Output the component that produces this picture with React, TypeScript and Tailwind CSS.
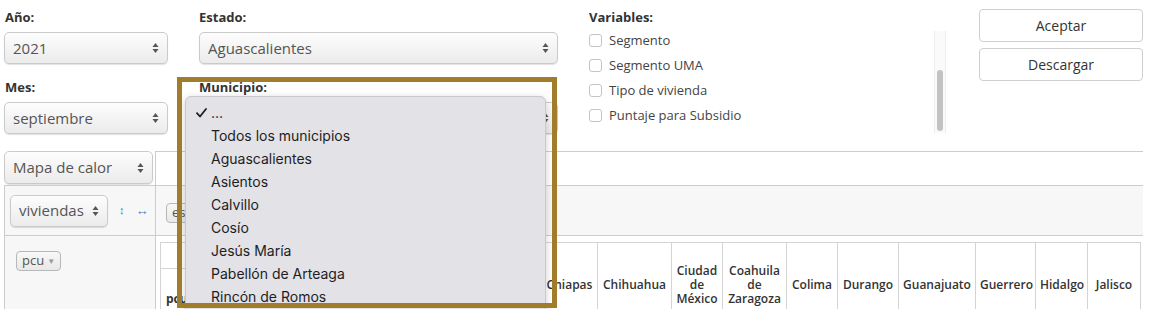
import React from "react";

const estados = [
  { name: "Chiapas", w: "w-[56px]" },
  { name: "Chihuahua", w: "w-[74px]" },
  { name: "Ciudad de México", w: "w-[51px]" },
  { name: "Coahuila de Zaragoza", w: "w-[64px]" },
  { name: "Colima", w: "w-[51px]" },
  { name: "Durango", w: "w-[61px]" },
  { name: "Guanajuato", w: "w-[77px]" },
  { name: "Guerrero", w: "w-[60px]" },
  { name: "Hidalgo", w: "w-[52px]" },
  { name: "Jalisco", w: "w-[53px]" },
];

const municipios = [
  "Todos los municipios",
  "Aguascalientes",
  "Asientos",
  "Calvillo",
  "Cosío",
  "Jesús María",
  "Pabellón de Arteaga",
  "Rincón de Romos",
];

const variables = ["Segmento", "Segmento UMA", "Tipo de vivienda", "Puntaje para Subsidio"];

function Arrows() {
  return (
    <svg width="7" height="12" viewBox="0 0 7 12" className="shrink-0">
      <path d="M0.5 5 L3.5 1 L6.5 5 Z" fill="#555" />
      <path d="M0.5 7 L3.5 11 L6.5 7 Z" fill="#555" />
    </svg>
  );
}

function NativeSelect({ value, className }: { value: string; className: string }) {
  return (
    <div
      className={`flex items-center justify-between rounded-[5px] border border-[#cacaca] bg-linear-to-b from-[#fdfdfd] to-[#ebebeb] px-[8px] text-[15px] text-[#555] shadow-[0_1px_1px_rgba(0,0,0,0.12)] ${className}`}
    >
      <span className="truncate">{value}</span>
      <Arrows />
    </div>
  );
}

function Pill({ label }: { label: string }) {
  return (
    <span className="inline-flex h-[20px] items-center gap-[3px] rounded-[4px] border border-[#b8b8b8] bg-linear-to-b from-[#f8f8f8] to-[#e8e8e8] px-[5px] text-[13px] text-[#555]">
      {label}
      <span className="text-[8px] text-[#999]">▼</span>
    </span>
  );
}

export default function App() {
  return (
    <div className="relative h-[309px] w-[1157px] overflow-hidden bg-white font-['Open_Sans',sans-serif] text-[#333]">
      {/* filtros */}
      <div className="flex items-start pl-[4px] pt-[9px]">
        <div className="w-[164px]">
          <p className="pl-[1px] text-[13px] font-bold leading-[16px]">Año:</p>
          <NativeSelect value="2021" className="mt-[7px] h-[32px]" />
          <p className="mt-[15px] pl-[1px] text-[13px] font-bold leading-[16px]">Mes:</p>
          <NativeSelect value="septiembre" className="mt-[7px] h-[32px]" />
        </div>

        <div className="ml-[31px] w-[359px]">
          <p className="text-[13px] font-bold leading-[16px]">Estado:</p>
          <NativeSelect value="Aguascalientes" className="mt-[7px] h-[32px] text-[15.5px]" />
          <p className="mt-[15px] text-[13px] font-bold leading-[16px]">Municipio:</p>
          {/* el valor queda tapado por el menú abierto */}
          <NativeSelect
            value=""
            className="mt-[7px] h-[32px] border-[#6fa2e0] shadow-[0_0_0_1px_#9cc1ee]"
          />
        </div>

        <div className="ml-[31px] w-[357px]">
          <p className="text-[13px] font-bold leading-[16px]">Variables:</p>
          <div className="mt-[3px] flex">
            <ul className="flex-1">
              {variables.map((v) => (
                <li key={v} className="flex h-[25px] items-center gap-[7px] text-[13px] text-[#444]">
                  <span className="h-[13px] w-[13px] rounded-[3px] border border-[#c4c4c4] bg-white" />
                  {v}
                </li>
              ))}
            </ul>
            <div className="mt-[3px] flex h-[102px] w-[12px] flex-col justify-end border-x border-[#ededed] bg-[#fafafa] px-[2px] pb-[2px]">
              <div className="h-[61px] rounded-full bg-[#c2c2c2]" />
            </div>
          </div>
        </div>

        <div className="ml-[33px] flex w-[164px] flex-col gap-[6px]">
          <button className="h-[33px] rounded-[4px] border border-[#cfcfcf] bg-white text-[14px] text-[#333]">
            Aceptar
          </button>
          <button className="h-[33px] rounded-[4px] border border-[#cfcfcf] bg-white text-[14px] text-[#333]">
            Descargar
          </button>
        </div>
      </div>

      {/* pivot */}
      <div className="ml-[4px] mt-[17px] w-[1139px] overflow-hidden">
        <div className="grid grid-cols-[151px_minmax(0,1fr)]">
          <div className="h-[34px]">
            <NativeSelect value="Mapa de calor" className="h-[33px] w-[149px]" />
          </div>
          <div className="border-l border-t border-[#cccccc]" />

          <div className="flex h-[50px] items-center border-l border-t border-[#cccccc] bg-[#f7f7f7] pl-[5px]">
            <NativeSelect value="viviendas" className="h-[32px] w-[98px]" />
            <span className="ml-[11px] text-[11px] text-[#3f7fc6]">↕</span>
            <span className="ml-[11px] text-[13px] text-[#3f7fc6]">↔</span>
          </div>
          <div className="flex h-[50px] items-center border-l border-t border-[#cccccc] bg-[#f7f7f7] pl-[10px] pt-[4px]">
            <Pill label="estado" />
          </div>

          <div className="h-[80px] border-l border-t border-[#cccccc] bg-[#f7f7f7] pl-[11px] pt-[11px]">
            <Pill label="pcu" />
          </div>
          <div className="h-[80px] overflow-hidden border-l border-t border-[#cccccc] pl-[4px] pt-[6px]">
            <table className="w-[980px] table-fixed border-collapse text-[12px] leading-[14px]">
              <thead>
                <tr className="h-[26px]">
                  <th className="w-[70px] border border-[#d4d4d4]" />
                  <th className="w-[311px] border border-[#d4d4d4]" />
                  {estados.map((e) => (
                    <th
                      key={e.name}
                      rowSpan={2}
                      className={`${e.w} border border-[#d4d4d4] px-[4px] text-center font-semibold`}
                    >
                      {e.name}
                    </th>
                  ))}
                </tr>
                <tr className="h-[58px]">
                  <th className="border border-[#d4d4d4] px-[5px] pt-[2px] text-left font-bold">pcu</th>
                  <th className="border border-[#d4d4d4]" />
                </tr>
              </thead>
            </table>
          </div>
        </div>
      </div>

      {/* menú nativo abierto */}
      <div className="absolute left-[185px] top-[96px] h-[230px] w-[361px] rounded-t-[6px] border border-[#c9c8cd] bg-[#e3e2e7] pt-[4px] font-['Inter',sans-serif] text-[14px] text-[#1e1e1e] shadow-[0_2px_8px_rgba(0,0,0,0.18)]">
        <div className="relative flex h-[23px] items-center pl-[25px]">
          <svg width="11" height="10" viewBox="0 0 11 10" className="absolute left-[10px] top-[7px]">
            <path d="M1 5.2 L4 8.5 L10 1" fill="none" stroke="#1e1e1e" strokeWidth="1.8" strokeLinecap="round" strokeLinejoin="round" />
          </svg>
          ...
        </div>
        {municipios.map((m) => (
          <div key={m} className="flex h-[23px] items-center pl-[25px]">
            {m}
          </div>
        ))}
      </div>

      {/* marco */}
      <div className="pointer-events-none absolute left-[177px] top-[77px] h-[231px] w-[380px] border-[5px] border-[#a17c2b]" />
    </div>
  );
}
